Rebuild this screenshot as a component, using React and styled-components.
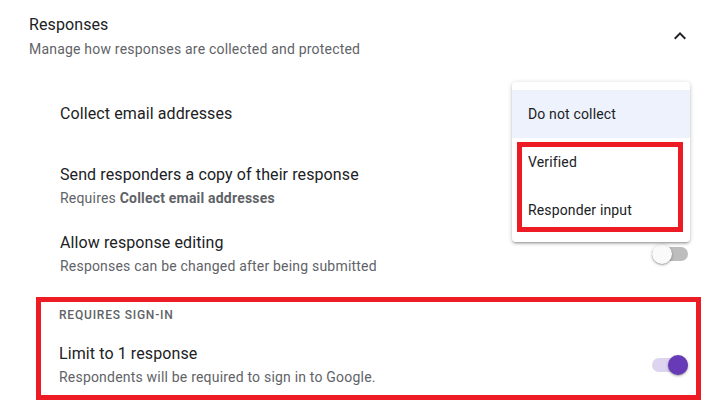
import React from "react";
import styled, { createGlobalStyle } from "styled-components";

const GlobalStyle = createGlobalStyle`
  html, body {
    margin: 0;
    padding: 0;
    background: #ffffff;
  }
  body {
    font-family: Roboto, "Liberation Sans", Arial, sans-serif;
    color: #202124;
  }
`;

const Page = styled.div`
  position: relative;
  width: 720px;
  height: 413px;
  overflow: hidden;
  padding-top: 13px;
  box-sizing: border-box;
`;

const Header = styled.div`
  display: flex;
  align-items: center;
  justify-content: space-between;
  padding: 0 28px 0 29px;
`;

const HeaderTitle = styled.div`
  font-size: 16px;
  line-height: 24px;
  letter-spacing: 0.1px;
  color: #202124;
`;

const HeaderDesc = styled.div`
  font-size: 14px;
  line-height: 20px;
  letter-spacing: 0.2px;
  margin-top: 2px;
  color: #5f6368;
`;

const Chevron = styled.svg`
  width: 24px;
  height: 24px;
  fill: #202124;
`;

const Rows = styled.div`
  padding: 0 32px 0 60px;
`;

const Row = styled.div`
  display: flex;
  align-items: center;
  justify-content: space-between;
  margin-top: ${(p) => p.$top}px;
`;

const RowTitle = styled.div`
  font-size: 16px;
  line-height: 24px;
  letter-spacing: 0.1px;
  color: #202124;
`;

const RowSub = styled.div`
  font-size: 14px;
  line-height: 20px;
  letter-spacing: 0.2px;
  margin-top: 1px;
  color: #5f6368;
  b {
    font-weight: 700;
  }
`;

const Highlight = styled.section`
  margin: 21px 19px 0 36px;
  border: 5px solid #ed1c24;
  padding: 5px 8px 8px 18px;
`;

const SectionLabel = styled.div`
  font-size: 12px;
  line-height: 16px;
  font-weight: 500;
  letter-spacing: 0.8px;
  text-transform: uppercase;
  color: #5f6368;
`;

const SwitchTrack = styled.div`
  position: relative;
  width: 36px;
  height: 14px;
  border-radius: 7px;
  flex-shrink: 0;
  background: ${(p) => (p.$on ? "#ddd4f0" : "#bdbdbd")};
`;

const SwitchThumb = styled.div`
  position: absolute;
  top: -3px;
  left: ${(p) => (p.$on ? "16px" : "0px")};
  width: 20px;
  height: 20px;
  border-radius: 50%;
  background: ${(p) => (p.$on ? "#673ab7" : "#fafafa")};
  box-shadow: 0 1px 3px rgba(0, 0, 0, 0.3), 0 1px 1px rgba(0, 0, 0, 0.14);
`;

const Menu = styled.div`
  position: absolute;
  top: 82px;
  left: 512px;
  width: 178px;
  padding: 8px 0;
  background: #ffffff;
  border-radius: 4px;
  box-shadow: 0 2px 2px rgba(0, 0, 0, 0.14), 0 3px 1px -2px rgba(0, 0, 0, 0.12),
    0 1px 5px rgba(0, 0, 0, 0.2);
  z-index: 5;
`;

const MenuItem = styled.div`
  height: 48px;
  display: flex;
  align-items: center;
  padding-left: 16px;
  font-size: 14px;
  letter-spacing: 0.15px;
  color: #202124;
  background: ${(p) => (p.$selected ? "#edf2fc" : "transparent")};
`;

const MenuMark = styled.div`
  position: absolute;
  top: 60px;
  left: 5px;
  width: 166px;
  height: 90px;
  box-sizing: border-box;
  border: 5px solid #ed1c24;
  pointer-events: none;
`;

function Switch({ on }) {
  return (
    <SwitchTrack $on={on}>
      <SwitchThumb $on={on} />
    </SwitchTrack>
  );
}

export default function App() {
  return (
    <>
      <GlobalStyle />
      <Page>
        <Header>
          <div>
            <HeaderTitle>Responses</HeaderTitle>
            <HeaderDesc>Manage how responses are collected and protected</HeaderDesc>
          </div>
          <Chevron viewBox="0 0 24 24">
            <path d="M12 8l-6 6 1.41 1.41L12 10.83l4.59 4.58L18 14z" />
          </Chevron>
        </Header>

        <Rows>
          <Row $top={43}>
            <RowTitle>Collect email addresses</RowTitle>
          </Row>
          <Row $top={37}>
            <div>
              <RowTitle>Send responders a copy of their response</RowTitle>
              <RowSub>
                Requires <b>Collect email addresses</b>
              </RowSub>
            </div>
          </Row>
          <Row $top={23}>
            <div>
              <RowTitle>Allow response editing</RowTitle>
              <RowSub>Responses can be changed after being submitted</RowSub>
            </div>
            <Switch on={false} />
          </Row>
        </Rows>

        <Highlight>
          <SectionLabel>Requires sign-in</SectionLabel>
          <Row $top={19}>
            <div>
              <RowTitle>Limit to 1 response</RowTitle>
              <RowSub>Respondents will be required to sign in to Google.</RowSub>
            </div>
            <Switch on />
          </Row>
        </Highlight>

        <Menu>
          <MenuItem $selected>Do not collect</MenuItem>
          <MenuItem>Verified</MenuItem>
          <MenuItem>Responder input</MenuItem>
          <MenuMark />
        </Menu>
      </Page>
    </>
  );
}
